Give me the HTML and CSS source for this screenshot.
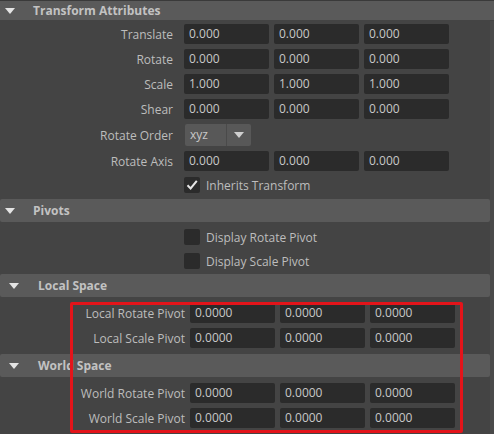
FILE: index.html
```html
<!DOCTYPE html>
<html lang="en">
<head>
    <meta charset="UTF-8">
    <title>Attribute Editor</title>
    <link rel="stylesheet" href="styles.css">
</head>
<body>

    <div class="editor">

        <section class="frame">
            <div class="frame-head top"><span class="arrow"></span>Transform Attributes</div>
            <div class="frame-body transform">
                <div class="attr">
                    <span class="name">Translate</span>
                    <div class="field">0.000</div><div class="field">0.000</div><div class="field">0.000</div>
                </div>
                <div class="attr">
                    <span class="name">Rotate</span>
                    <div class="field">0.000</div><div class="field">0.000</div><div class="field">0.000</div>
                </div>
                <div class="attr">
                    <span class="name">Scale</span>
                    <div class="field">1.000</div><div class="field">1.000</div><div class="field">1.000</div>
                </div>
                <div class="attr">
                    <span class="name">Shear</span>
                    <div class="field">0.000</div><div class="field">0.000</div><div class="field">0.000</div>
                </div>
                <div class="attr tall">
                    <span class="name">Rotate Order</span>
                    <div class="combo">
                        <span class="combo-value">xyz</span>
                        <span class="combo-btn"><span class="arrow small"></span></span>
                    </div>
                </div>
                <div class="attr">
                    <span class="name">Rotate Axis</span>
                    <div class="field">0.000</div><div class="field">0.000</div><div class="field">0.000</div>
                </div>
                <div class="attr check-row">
                    <span class="check on">
                        <svg width="16" height="16" viewBox="0 0 16 16"><path d="M3.5 8.2 L6.6 11.5 L12.8 3.8" fill="none" stroke="#e6e6e6" stroke-width="2"/></svg>
                    </span>
                    Inherits Transform
                </div>
            </div>
        </section>

        <section class="frame">
            <div class="frame-head"><span class="arrow"></span>Pivots</div>
            <div class="frame-body pivots">
                <div class="attr check-row"><span class="check"></span>Display Rotate Pivot</div>
                <div class="attr check-row"><span class="check"></span>Display Scale Pivot</div>
            </div>

            <div class="frame-head sub"><span class="arrow"></span>Local Space</div>
            <div class="frame-body space">
                <div class="attr">
                    <span class="name">Local Rotate Pivot</span>
                    <div class="field">0.0000</div><div class="field">0.0000</div><div class="field">0.0000</div>
                </div>
                <div class="attr">
                    <span class="name">Local Scale Pivot</span>
                    <div class="field">0.0000</div><div class="field">0.0000</div><div class="field">0.0000</div>
                </div>
            </div>

            <div class="frame-head sub"><span class="arrow"></span>World Space</div>
            <div class="frame-body space">
                <div class="attr">
                    <span class="name">World Rotate Pivot</span>
                    <div class="field">0.0000</div><div class="field">0.0000</div><div class="field">0.0000</div>
                </div>
                <div class="attr">
                    <span class="name">World Scale Pivot</span>
                    <div class="field">0.0000</div><div class="field">0.0000</div><div class="field">0.0000</div>
                </div>
            </div>
        </section>

        <!-- red callout box around the pivot fields -->
        <div class="callout"></div>
        <div class="scroll-track"></div>
    </div>

</body>
</html>
```

FILE: styles.css
```css
:root {
    --bg: #444444;
    --head-bg: #5a5a5a;
    --field-bg: #2b2b2b;
    --text: #bdbdbd;
    --value: #c8c8c8;
}
body {
    margin: 0;
    background-color: var(--bg);
    color: var(--text);
    font-family: "Open Sans", "Noto Sans", sans-serif;
    font-size: 12px;
    overflow: hidden;
}
.editor {
    position: relative;
    width: 494px;
    height: 434px;
    padding-right: 4px;
    box-sizing: border-box;
    border-top: 1px solid #3a3a3a;
}
.frame-head {
    display: flex;
    align-items: center;
    height: 23px;
    background-color: var(--head-bg);
    border-radius: 2px;
    color: #c2c2c2;
    font-weight: 700;
    font-size: 12px;
}
.frame-head.top {
    height: 19px;
    margin-right: -4px;
    border-radius: 0;
}
.frame-head .arrow {
    margin: 0 18px 0 5px;
}
.frame-head.sub .arrow {
    margin-left: 9px;
    margin-right: 19px;
}
.arrow {
    width: 0;
    height: 0;
    border-left: 5px solid transparent;
    border-right: 5px solid transparent;
    border-top: 6px solid #e4e4e4;
}
.frame-body {
    display: flex;
    flex-direction: column;
}
.transform {
    padding: 4px 0 5px;
    gap: 5px;
}
.pivots {
    padding: 5px 0 3px;
    gap: 4px;
}
.space {
    padding: 6px 0;
    gap: 5px;
}
.attr {
    display: flex;
    align-items: center;
    height: 20px;
}
.attr.tall {
    height: 22px;
}
.name {
    width: 173px;
    margin-right: 11px;
    text-align: right;
    white-space: nowrap;
}
.space .name {
    width: 185px;
    margin-right: 5px;
}
.field {
    width: 85px;
    height: 20px;
    margin-right: 5px;
    padding-left: 5px;
    box-sizing: border-box;
    line-height: 20px;
    background-color: var(--field-bg);
    border-radius: 2px;
    color: var(--value);
}
.combo {
    display: flex;
    width: 66px;
    height: 22px;
    margin-left: 1px;
    background-color: #585858;
    border-radius: 2px;
}
.combo-value {
    width: 41px;
    padding-left: 5px;
    box-sizing: border-box;
    line-height: 22px;
    color: var(--value);
}
.combo-btn {
    display: flex;
    flex: 1;
    align-items: center;
    justify-content: center;
    border-left: 1px solid #4a4a4a;
}
.arrow.small {
    border-top-color: #cfcfcf;
}
.check-row {
    padding-left: 184px;
}
.transform .check-row {
    height: 18px;
}
.check {
    display: block;
    width: 16px;
    height: 16px;
    margin-right: 6px;
    background-color: var(--field-bg);
    border-radius: 2px;
}
.check svg {
    display: block;
}
.callout {
    position: absolute;
    left: 70px;
    top: 301px;
    width: 393px;
    height: 131px;
    box-sizing: border-box;
    border: 3px solid #e3141a;
    border-radius: 2px;
}
.scroll-track {
    position: absolute;
    right: 0;
    top: 20px;
    bottom: 0;
    width: 4px;
    background-color: #4a4a4a;
}
```
